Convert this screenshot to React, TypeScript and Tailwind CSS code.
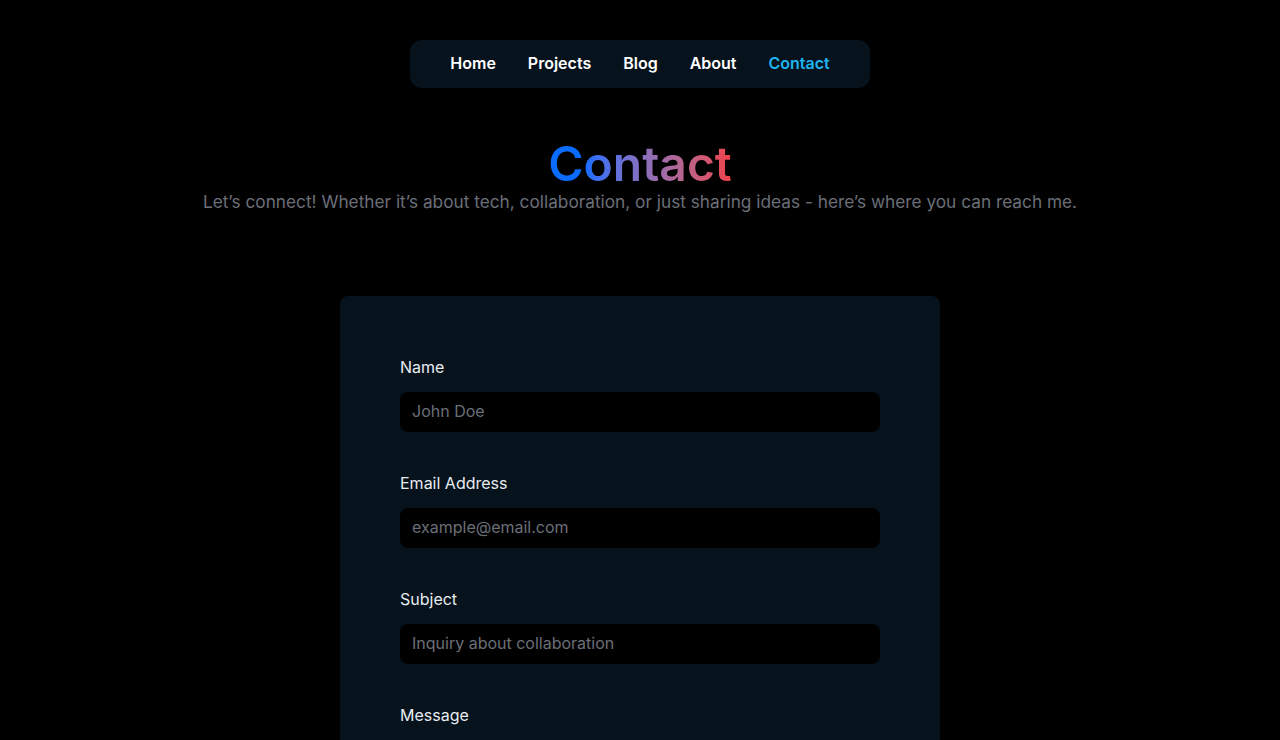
import React from "react";

const navLinks = ["Home", "Projects", "Blog", "About", "Contact"];

const fields = [
  { label: "Name", placeholder: "John Doe", type: "text" },
  { label: "Email Address", placeholder: "example@email.com", type: "email" },
  { label: "Subject", placeholder: "Inquiry about collaboration", type: "text" },
];

export default function App() {
  return (
    <div
      className="min-h-screen bg-black text-white flex flex-col items-center"
      style={{ fontFamily: "Inter, 'Liberation Sans', sans-serif" }}
    >
      {/* Nav */}
      <nav className="mt-10 h-12 px-10 pb-0.5 rounded-xl bg-[#06121c] flex items-center gap-8">
        {navLinks.map((link) => (
          <a
            key={link}
            href="#"
            className={`text-base font-semibold ${
              link === "Contact" ? "text-[#1fb5f0]" : "text-white"
            }`}
          >
            {link}
          </a>
        ))}
      </nav>

      {/* Header */}
      <h1 className="mt-[52px] text-5xl leading-[48px] font-semibold bg-gradient-to-r from-[#0a6cff] from-20% to-[#ef3e48] bg-clip-text text-transparent">
        Contact
      </h1>
      <p className="text-[17.25px] leading-7 text-[#6b6f78]">
        Let’s connect! Whether it’s about tech, collaboration, or just sharing ideas - here’s where you can reach me.
      </p>

      {/* Form card */}
      <div className="mt-20 w-[600px] rounded-lg bg-[#06121c] px-[60px] pt-[59px] pb-16">
        <form className="flex flex-col">
          {fields.map((f) => (
            <div key={f.label} className="mb-[39px] flex flex-col">
              <label className="mb-[13px] text-base leading-6 text-[#e8ecf0]">{f.label}</label>
              <input
                type={f.type}
                placeholder={f.placeholder}
                className="h-10 rounded-lg bg-black px-3 pb-0.5 text-base text-white placeholder-[#6b6f78] outline-none"
              />
            </div>
          ))}
          <div className="flex flex-col">
            <label className="mb-[13px] text-base leading-6 text-[#e8ecf0]">Message</label>
            <textarea
              rows={6}
              placeholder="Your message..."
              className="rounded-lg bg-black px-3 py-2 text-base text-white placeholder-[#6b6f78] outline-none resize-none"
            />
          </div>
          <button
            type="submit"
            className="mt-8 h-11 rounded-lg bg-[#1fb5f0] text-black font-semibold"
          >
            Send Message
          </button>
        </form>
      </div>
      <div className="h-20" />
    </div>
  );
}
